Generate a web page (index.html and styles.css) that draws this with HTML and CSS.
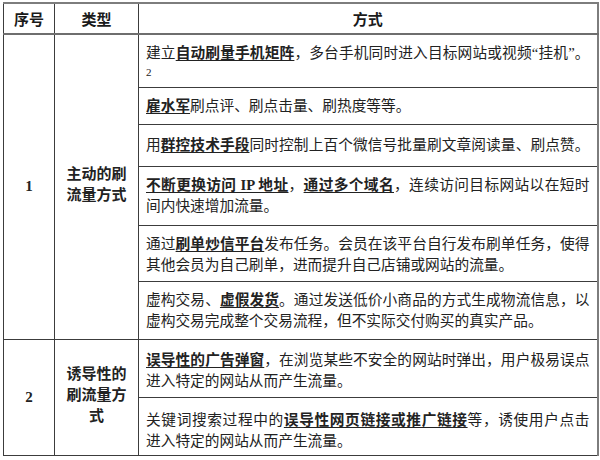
FILE: index.html
```html
<!DOCTYPE html>
<html lang="zh-CN">
<head>
<meta charset="utf-8">
<title>刷流量方式</title>
<link rel="stylesheet" href="styles.css">
</head>
<body>
<div class="wrap">
<table class="grid">
  <colgroup>
    <col class="c-no">
    <col class="c-type">
    <col class="c-way">
  </colgroup>
  <thead>
    <tr class="rh">
      <th>序号</th>
      <th>类型</th>
      <th>方式</th>
    </tr>
  </thead>
  <tbody>
    <tr class="ra">
      <td class="no" rowspan="6">1</td>
      <td class="type" rowspan="6">主动的刷流量方式</td>
      <td class="way">
        <div class="jl">建立<span class="key">自动刷量手机矩阵</span>，多台手机同时进入目标网站或视频“挂机”。</div>
        <div class="note">2</div>
      </td>
    </tr>
    <tr class="rb">
      <td class="way"><div><span class="key">雇水军</span>刷点评、刷点击量、刷热度等等。</div></td>
    </tr>
    <tr class="rc">
      <td class="way pc"><div class="jl">用<span class="key">群控技术手段</span>同时控制上百个微信号批量刷文章阅读量、刷点赞。</div></td>
    </tr>
    <tr class="rd">
      <td class="way">
        <div class="jl"><span class="key">不断更换访问 IP 地址</span>，<span class="key">通过多个域名</span>，连续访问目标网站以在短时</div>
        <div>间内快速增加流量。</div>
      </td>
    </tr>
    <tr class="re">
      <td class="way">
        <div class="jl">通过<span class="key">刷单炒信平台</span>发布任务。会员在该平台自行发布刷单任务，使得</div>
        <div>其他会员为自己刷单，进而提升自己店铺或网站的流量。</div>
      </td>
    </tr>
    <tr class="rf">
      <td class="way">
        <div class="jl">虚构交易、<span class="key">虚假发货</span>。通过发送低价小商品的方式生成物流信息，以</div>
        <div>虚构交易完成整个交易流程，但不实际交付购买的真实产品。</div>
      </td>
    </tr>
    <tr class="rg">
      <td class="no" rowspan="2">2</td>
      <td class="type" rowspan="2">诱导性的刷流量方式</td>
      <td class="way pg">
        <div class="jl"><span class="key">误导性的广告弹窗</span>，在浏览某些不安全的网站时弹出，用户极易误点</div>
        <div>进入特定的网站从而产生流量。</div>
      </td>
    </tr>
    <tr class="rh2">
      <td class="way ph">
        <div class="jl">关键词搜索过程中的<span class="key">误导性网页链接或推广链接</span>等，诱使用户点击</div>
        <div>进入特定的网站从而产生流量。</div>
      </td>
    </tr>
  </tbody>
</table>
</div>
</body>
</html>
```

FILE: styles.css
```css
html, body {
  margin: 0;
  padding: 0;
  background: #ffffff;
}

body {
  font-family: "Liberation Serif", "Noto Sans CJK SC", serif;
  color: #222222;
}

.wrap {
  padding: 2px 3px 0 3px;
}

.grid {
  border-collapse: collapse;
  table-layout: fixed;
  width: 594px;
}

.c-no { width: 51px; }
.c-type { width: 84px; }
.c-way { width: 459px; }

.grid th,
.grid td {
  border: 1px solid #3c3c3c;
  padding: 0;
}

.grid th {
  border-top: 2px solid #7d7d7d;
  border-bottom: 2px solid #6e6e6e;
  font-size: 15px;
  font-weight: bold;
  text-align: center;
  vertical-align: middle;
  color: #1a1a1a;
}

.grid th:last-child,
.grid td.way {
  border-right: 2px solid #7d7d7d;
}

.rh { height: 31px; }
.ra { height: 53px; }
.rb { height: 37px; }
.rc { height: 42px; }
.rd { height: 59px; }
.re { height: 56px; }
.rf { height: 58px; }
.rg { height: 58px; }
.rh2 { height: 58px; }

.no {
  text-align: center;
  vertical-align: middle;
  font-weight: bold;
  font-size: 15px;
}

.type {
  text-align: center;
  vertical-align: middle;
  font-weight: bold;
  font-size: 15px;
  line-height: 21px;
  padding: 0 6px 3px 6px !important;
}

.way {
  vertical-align: top;
  padding: 8px 7px 0 7px !important;
  font-size: 14.7px;
  line-height: 21px;
}

.way.pc { padding-top: 10px !important; }
.way.pg { padding-top: 10px !important; }
.way.ph { padding-top: 12px !important; }

.jl {
  text-align: justify;
  text-align-last: justify;
  white-space: nowrap;
}

.key {
  font-weight: bold;
  text-decoration: underline;
  text-underline-offset: 2px;
  text-decoration-thickness: 1px;
}

.note {
  font-size: 11px;
  line-height: 16px;
}
```
